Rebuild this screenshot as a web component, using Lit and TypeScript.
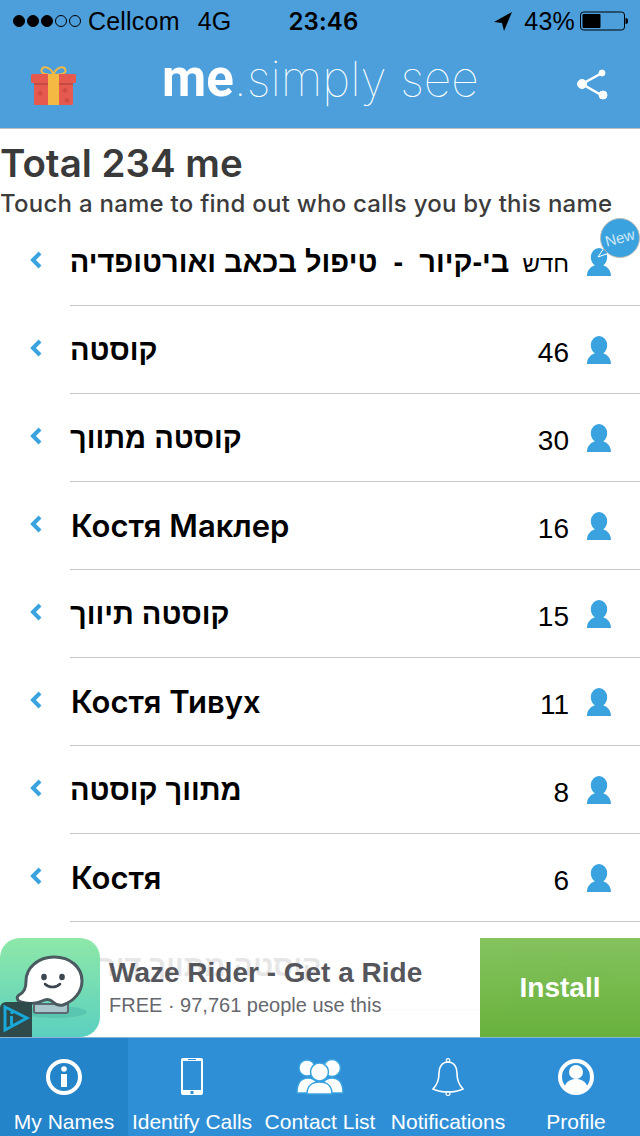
import { LitElement, html, css, svg } from "lit";
import { customElement } from "lit/decorators.js";

const rows = [
  { name: "בי-קיור  -  טיפול בכאב ואורטופדיה", count: "חדש", isNew: true },
  { name: "קוסטה", count: "46" },
  { name: "קוסטה מתווך", count: "30" },
  { name: "Костя Маклер", count: "16", cy: true },
  { name: "קוסטה תיווך", count: "15" },
  { name: "Костя Тивух", count: "11", cy: true },
  { name: "מתווך קוסטה", count: "8" },
  { name: "Костя", count: "6", cy: true },
  { name: "קוסטה מתווך דירים", count: "5" },
];

const person = svg`<path d="M12 0a8.2 8.2 0 0 1 8.2 8.3c0 3.2-1.7 5.8-4 7.2 4.600 1.400 7.800 4.800 7.800 9.500H0c0-4.700 3.200-8.100 7.800-9.500-2.300-1.400-4-4-4-7.200A8.200 8.200 0 0 1 12 0z"/>`;

@customElement("app-root")
export class AppRoot extends LitElement {
  static styles = css`
    :host { display: block; position: relative; width: 640px; height: 1136px; overflow: hidden; background: #fff; font-family: "Liberation Sans", Arial, sans-serif; color: #000; }
    .top { background: #4c9fdb; height: 128px; border-bottom: 1px solid #bdbdbd; }
    .status { height: 42px; display: grid; grid-template-columns: 1fr auto 1fr; align-items: center; padding: 0 12px 0 13px; font-size: 25px; letter-spacing: 0.2px; }
    .left, .right { display: flex; align-items: center; }
    .right { justify-content: flex-end; }
    .dots { display: flex; gap: 2px; margin-right: 7px; }
    .dot { width: 12px; height: 12px; border-radius: 50%; border: 1px solid #000; box-sizing: border-box; }
    .dot.on { background: #000; }
    .net { margin-left: 18px; }
    .time { font-family: Inter, sans-serif; font-weight: 600; font-size: 24px; margin-left: 6px; }
    .pct { margin: 0 5px 0 12px; }
    .nav { height: 86px; display: flex; align-items: center; padding: 0 32px 0 30px; }
    .logo { color: #fff; font-family: Inter, sans-serif; font-size: 48px; font-weight: 100; margin: -13px 0 0 84px; white-space: nowrap; flex: 1; }
    .logo b { font-family: Roboto, sans-serif; font-weight: 700; font-size: 51px; }
    .heading { margin: 0; padding-top: 12px; font-family: Inter, "Liberation Sans", sans-serif; font-size: 38.5px; line-height: 44px; font-weight: 600; color: #3a3a3a; white-space: nowrap; }
    .sub { margin: 5px 0 0; font-family: Inter, "Liberation Sans", sans-serif; font-weight: 500; font-size: 24px; letter-spacing: 0.25px; line-height: 28px; color: #3c3c3c; white-space: nowrap; }
    .row { height: 87px; display: grid; grid-template-columns: 70px minmax(0, 1fr) auto 71px; align-items: center; position: relative; }
    .sep { height: 1px; background: #c8c8c8; margin-left: 70px; }
    .chev { margin-left: 30px; margin-top: -4px; display: block; }
    .name { font-size: 29px; font-weight: bold; white-space: pre; margin-top: 1px; text-align: left; }
    .name.cy { font-family: Inter, sans-serif; font-weight: 600; font-size: 31px; margin: -1px 0 0 1px; }
    .count { font-size: 28px; margin-top: 7px; text-align: right; }
    .count.hb { font-size: 24px; margin-left: 13px; margin-top: 5px; }
    .icon { margin-left: 18px; display: block; fill: #3aa3df; }
    .new { position: absolute; left: 596px; top: -2px; width: 44px; height: 46px; overflow: visible; }
    .ad { position: absolute; left: 0; right: 0; top: 938px; height: 99px; display: flex; background: rgba(255,255,255,0.9); }
    .appicon { width: 100px; height: 99px; flex: none; position: relative; }
    .adtext { flex: 1; padding: 19px 0 0 9px; color: #55565c; }
    .adtitle { font-size: 28px; line-height: 32px; font-weight: bold; white-space: nowrap; }
    .adsub { font-size: 20px; line-height: 26px; margin-top: 3px; color: #66676d; white-space: nowrap; }
    .install { width: 160px; background: linear-gradient(#7cbf52, #5dab2e); color: #fff; font-size: 28px; font-weight: bold; display: flex; align-items: center; justify-content: center; opacity: 0.93; }
    .tabs { position: absolute; left: 0; right: 0; top: 1037px; height: 99px; display: grid; grid-template-columns: repeat(5, 128px); background: #2f8fd6; border-top: 1px solid #8ab4d4; box-sizing: border-box; }
    .tab { display: flex; flex-direction: column; align-items: center; color: #fff; font-size: 21px; padding-top: 20px; box-sizing: border-box; white-space: nowrap; }
    .tab.active { background: #2484c9; }
    .tab svg { height: 38px; width: 48px; display: block; }
    .tab span { margin-top: 13px; line-height: 26px; }
  `;

  gift() {
    return html`<svg width="48" height="44" viewBox="0 0 48 44">
      <path d="M23.500 12c-2-8-11-10-12-5-1 4 6 5 12 5zm0 0c2-8 11-10 12-5 1 4-6 5-12 5z" fill="none" stroke="#f4b942" stroke-width="2"/>
      <rect x="1" y="11" width="45" height="9" rx="1.500" fill="#e5594f"/>
      <rect x="4" y="20" width="39" height="22" rx="1" fill="#e5594f"/>
      <rect x="4" y="20" width="39" height="2" fill="#c44b43"/>
      <path d="M10 27l1 2 2 .4-1.500 1.500.3 2-1.800-1-1.800 1 .3-2L7 29.400l2-.4zM35 24l1 2 2 .4-1.500 1.500.3 2-1.800-1-1.800 1 .3-2-1.500-1.500 2-.4zM37 34l1 2 2 .4-1.500 1.500.3 2-1.800-1-1.800 1 .3-2-1.500-1.500 2-.4z" fill="#cf4a42"/>
      <rect x="18" y="11" width="11" height="31" fill="#f4b942"/>
    </svg>`;
  }

  render() {
    return html`
      <div class="top">
        <div class="status">
          <div class="left">
            <div class="dots">
              ${[1, 1, 1, 0, 0].map((d) => html`<i class="dot ${d ? "on" : ""}"></i>`)}
            </div>
            <span>Cellcom</span><span class="net">4G</span>
          </div>
          <div class="time">23:46</div>
          <div class="right">
            <svg width="18" height="19" viewBox="0 0 18 19"><path d="M18 0 0 10l8 1 2 8z"/></svg>
            <span class="pct">43%</span>
            <svg width="48" height="20" viewBox="0 0 48 20">
              <rect x=".5" y="1" width="44" height="18" rx="3" fill="none" stroke="#000"/>
              <rect x="2.500" y="3" width="18" height="14" rx="1"/>
              <path d="M45.500 7c2 0 2.500 1 2.500 3s-.5 3-2.500 3z"/>
            </svg>
          </div>
        </div>
        <div class="nav">
          ${this.gift()}
          <div class="logo"><b>me</b>.simply see</div>
          <svg width="32" height="32" viewBox="0 0 32 32" fill="#fff" stroke="#fff" stroke-width="1">
            <path d="M26 4 6 15l21 12" fill="none" stroke-width="2.500"/>
            <circle cx="26" cy="4" r="3"/><circle cx="6" cy="15" r="4.500"/><circle cx="27" cy="26" r="4"/>
          </svg>
        </div>
      </div>
      <h1 class="heading">Total 234 me</h1>
      <p class="sub">Touch a name to find out who calls you by this name</p>
      <div class="list">
        ${rows.map(
          (r) => html`
            <div class="row">
              <svg class="chev" width="12" height="18" viewBox="0 0 12 18"><path d="M10 2 3 9l7 7" fill="none" stroke="#3aa3df" stroke-width="4"/></svg>
              <div class="name ${r.cy ? "cy" : ""}" dir="auto">${r.name}</div>
              <div class="count ${r.isNew ? "hb" : ""}">${r.count}</div>
              <svg class="icon" width="24" height="28" viewBox="0 0 24 25" preserveAspectRatio="none">${person}</svg>
              ${r.isNew
                ? html`<svg class="new" viewBox="0 0 44 46"><path d="M10 29 2 41l14-5z" fill="#3aa3df" stroke="#fff" stroke-width="1"/><circle cx="24" cy="22" r="19.500" fill="#3aa3df" stroke="#bbb" stroke-width="1"/><text x="24" y="27" font-size="15" fill="#cfe8f7" text-anchor="middle" transform="rotate(-15 24 22)">New</text></svg>`
                : ""}
            </div>
            <div class="sep"></div>
          `
        )}
      </div>
      <div class="ad">
        <div class="appicon">
          <svg width="100" height="99" viewBox="0 0 100 99">
            <defs><linearGradient id="g" x1="0" y1="0" x2="0" y2="1"><stop offset="0" stop-color="#8ee8a8"/><stop offset="1" stop-color="#5bd0c0"/></linearGradient></defs>
            <rect width="100" height="99" rx="20" fill="url(#g)"/>
            <ellipse cx="55" cy="74" rx="32" ry="6" fill="#4bb5a5" opacity=".5"/>
            <path d="M34 66h34v7a2 2 0 0 1-2 2H36a2 2 0 0 1-2-2z" fill="#a9c6cc" stroke="#5a6a70" stroke-width="2"/>
            <path d="M54 19C38 19 26 30 26 43c0 8-2 11-7 14-3 2-2 6 2 7 6 2 15 2 21-1 4-2 8-2 11 1 3 3 6 4 10 3 11-4 19-13 19-24 0-14-12-24-28-24z" fill="#fff" stroke="#4a5a60" stroke-width="3"/>
            <ellipse cx="44" cy="39" rx="2.800" ry="3.200" fill="#3c4650"/><ellipse cx="62" cy="39" rx="2.800" ry="3.200" fill="#3c4650"/>
            <path d="M45 46c4 4 11 4 15 0" fill="none" stroke="#3c4650" stroke-width="2.500" stroke-linecap="round"/>
            <path d="M0 70a6 6 0 0 1 6-6h26v35H0z" fill="#2f4a4a"/>
            <path d="M5 69 27 80 5 92z" fill="none" stroke="#19a8d8" stroke-width="3"/>
            <rect x="10" y="78" width="3" height="9" fill="#19a8d8"/><circle cx="12" cy="74.500" r="1.700" fill="#19a8d8"/>
          </svg>
        </div>
        <div class="adtext">
          <div class="adtitle">Waze Rider - Get a Ride</div>
          <div class="adsub">FREE · 97,761 people use this</div>
        </div>
        <div class="install">Install</div>
      </div>
      <div class="tabs">
        <div class="tab active">
          <svg viewBox="0 0 48 38"><circle cx="24" cy="19" r="16" fill="none" stroke="#fff" stroke-width="4"/><circle cx="24" cy="11" r="2.800" fill="#fff"/><rect x="21" y="16" width="6" height="13" fill="#fff"/></svg>
          <span>My Names</span>
        </div>
        <div class="tab">
          <svg viewBox="0 0 48 38"><path fill-rule="evenodd" fill="#fff" d="M13 2a2 2 0 0 1 2-2h18a2 2 0 0 1 2 2v33a2 2 0 0 1-2 2H15a2 2 0 0 1-2-2zM15 3v29h18V3z"/><rect x="20" y="1" width="8" height="1" fill="#2f8fd6"/><rect x="22.500" y="33" width="3" height="3" fill="#2f8fd6"/></svg>
          <span>Identify Calls</span>
        </div>
        <div class="tab">
          <svg viewBox="0 0 48 38" fill="#fff" stroke="#3aa3df" stroke-width="1.500">
            <circle cx="11" cy="10" r="8"/><circle cx="36" cy="10" r="8.500"/>
            <path d="M1 35c0-10 4-15 11-15s11 5 11 15zM25 35c0-10 4-15 11-15s11 5 11 15z"/>
            <circle cx="23.500" cy="14" r="9"/><path d="M11 36c0-8 5-12 12.500-12S36 28 36 36z"/>
          </svg>
          <span>Contact List</span>
        </div>
        <div class="tab">
          <svg viewBox="0 0 48 38"><path d="M24 4c-6 0-9 5-9 11 0 8-3 13-6 16 4 2 9 3 15 3s11-1 15-3c-3-3-6-8-6-16 0-6-3-11-9-11z" fill="none" stroke="#fff" stroke-width="1.600"/><circle cx="24" cy="2.500" r="1.800" fill="none" stroke="#fff" stroke-width="1.200"/><circle cx="24" cy="35.500" r="2" fill="none" stroke="#fff" stroke-width="1.200"/></svg>
          <span>Notifications</span>
        </div>
        <div class="tab">
          <svg viewBox="0 0 48 38"><circle cx="24" cy="19" r="16" fill="none" stroke="#fff" stroke-width="4"/><circle cx="24" cy="14" r="7" fill="#fff"/><path d="M12 30c2-7 7-9 12-9s10 2 12 9c-3 3-7 5-12 5s-9-2-12-5z" fill="#fff"/></svg>
          <span>Profile</span>
        </div>
      </div>
    `;
  }
}
